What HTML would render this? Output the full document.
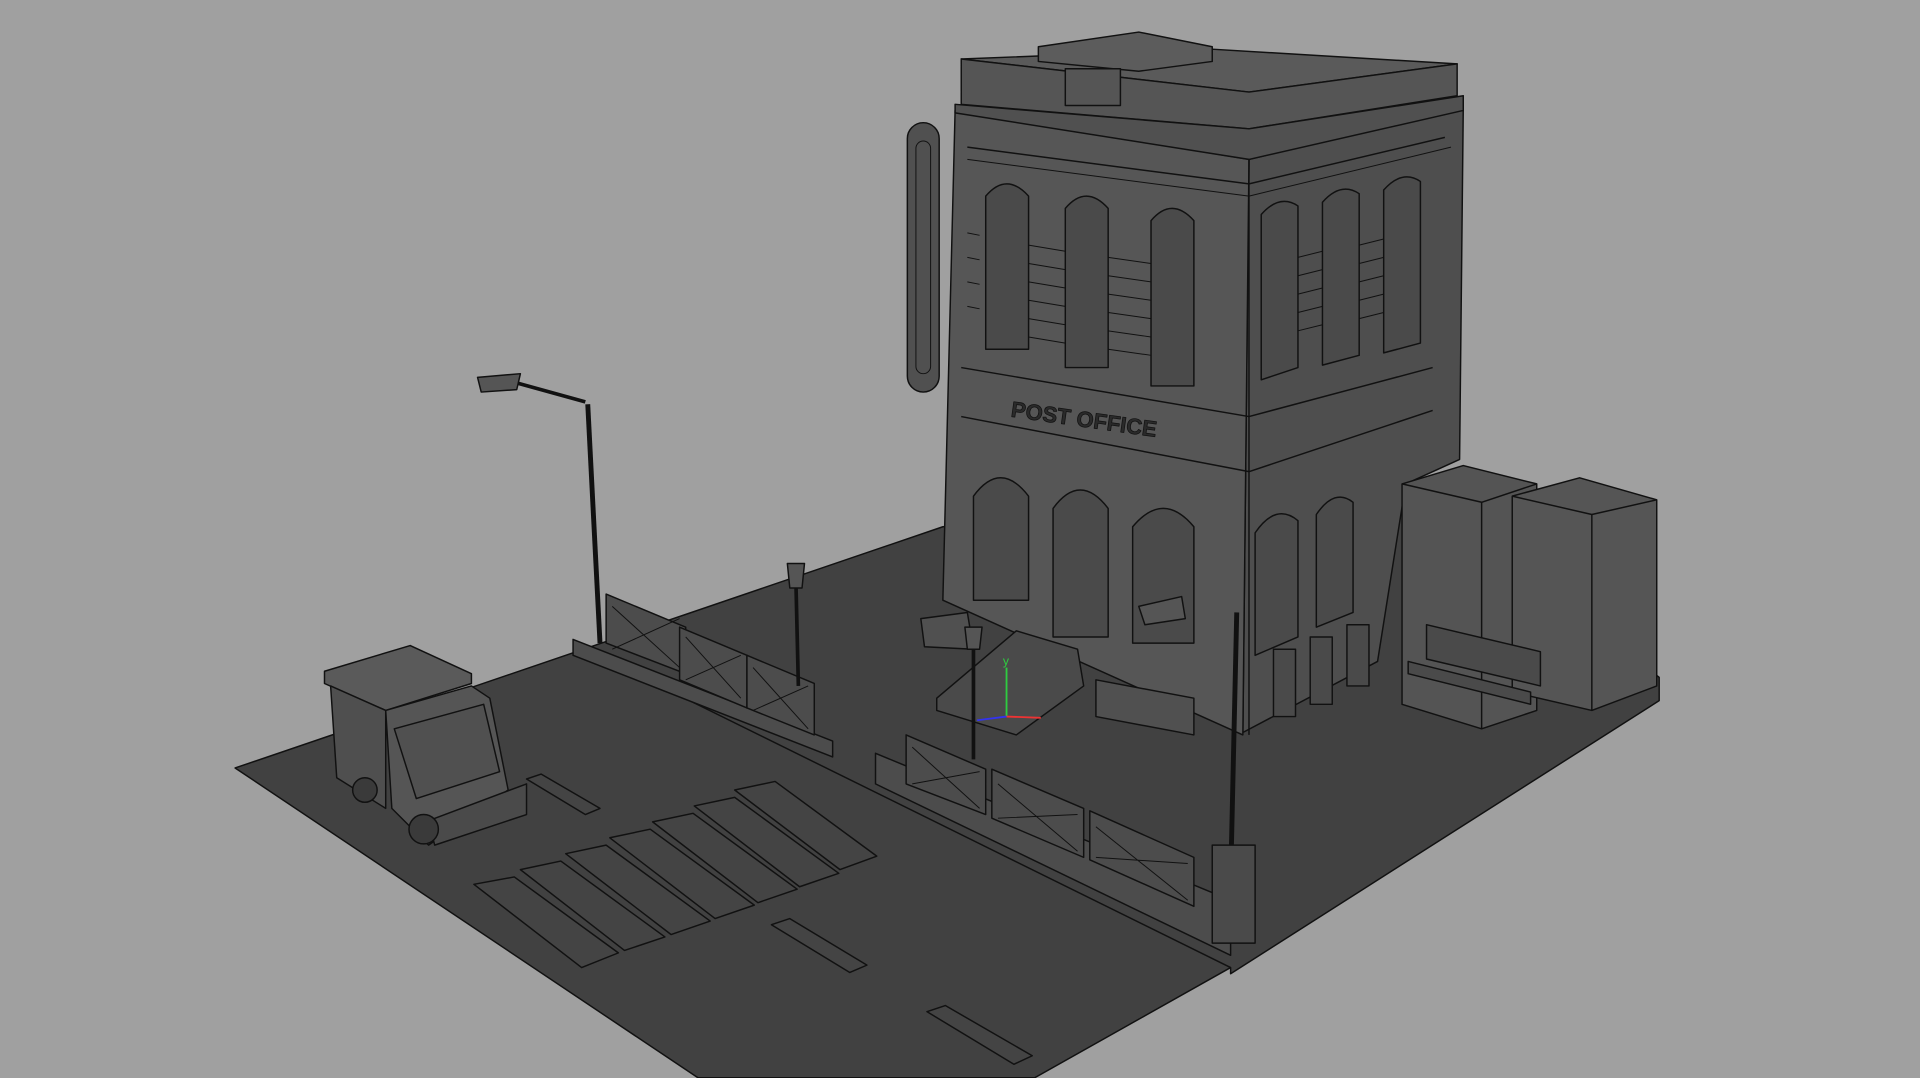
<!DOCTYPE html>
<html><head><meta charset="utf-8"><style>
html,body{margin:0;padding:0;background:#a0a0a0;width:1920px;height:1078px;overflow:hidden}
svg{display:block}
</style></head><body>
<svg width="1920" height="1078" viewBox="0 0 1568 880" xmlns="http://www.w3.org/2000/svg">
<rect width="1568" height="880" fill="#a0a0a0"/>
<g stroke="#111" stroke-width="1.2" stroke-linejoin="round">
<polygon points="192,627 770,430 1150,392 1355,553 1355,572 1005,795 1005,790 845,880 570,880" fill="#414141"/>
<g fill="#444">
<polygon points="387,722 420,716 505,778 475,790"/>
<polygon points="425,710 458,703 543,765 510,776"/>
<polygon points="462,697 495,690 580,752 548,763"/>
<polygon points="498,684 531,677 616,739 584,750"/>
<polygon points="533,671 566,664 651,726 619,737"/>
<polygon points="567,658 600,651 685,713 653,724"/>
<polygon points="600,645 633,638 716,699 686,710"/>
<polygon points="430,636 442,632 490,660 478,665"/>
<polygon points="630,755 645,750 708,788 694,794"/>
<polygon points="757,826 772,821 843,862 828,869"/>
</g>
<polyline points="468,525 1005,790" fill="none"/>
<polygon points="1020,130 1195,88 1192,375 1148,395 1125,540 1015,598" fill="#4e4e4e"/>
<polygon points="780,90 1020,130 1015,600 770,490" fill="#565656"/>
<polygon points="785,48 990,40 1190,52 1020,75" fill="#5a5a5a"/>
<polygon points="785,48 1020,75 1190,52 1190,78 1020,105 785,85" fill="#555"/>
<polygon points="780,85 1020,105 1195,78 1195,90 1020,130 780,92" fill="#505050"/>
<polygon points="848,38 930,26 990,38 990,50 930,58 848,50" fill="#5c5c5c"/>
<rect x="870" y="56" width="45" height="30" fill="#555"/>
<g fill="#4a4a4a">
<path d="M805 285 V160 Q822 140 840 160 V285 Z"/>
<path d="M870 300 V170 Q887 150 905 170 V300 Z"/>
<path d="M940 315 V180 Q957 160 975 180 V315 Z"/>
<path d="M1030 310 V175 Q1045 158 1060 168 V300 Z"/>
<path d="M1080 298 V165 Q1095 148 1110 158 V290 Z"/>
<path d="M1130 288 V155 Q1145 138 1160 148 V280 Z"/>
<path d="M795 490 V405 Q817 375 840 405 V490 Z"/>
<path d="M860 520 V415 Q882 385 905 415 V520 Z"/>
<path d="M925 525 V430 Q950 400 975 430 V525 Z"/>
<path d="M1025 535 V435 Q1042 410 1060 425 V520 Z"/>
<path d="M1075 512 V420 Q1090 398 1105 410 V500 Z"/>
</g>
<g fill="none" stroke-width="0.8">
<path d="M840 200 L870 205 M840 215 L870 220 M840 230 L870 235 M840 245 L870 250 M840 260 L870 265 M840 275 L870 280"/>
<path d="M905 210 L940 215 M905 225 L940 230 M905 240 L940 245 M905 255 L940 260 M905 270 L940 275 M905 285 L940 290"/>
<path d="M1060 210 L1080 205 M1060 225 L1080 220 M1060 240 L1080 235 M1060 255 L1080 250 M1060 270 L1080 265"/>
<path d="M1110 200 L1130 195 M1110 215 L1130 210 M1110 230 L1130 225 M1110 245 L1130 240 M1110 260 L1130 255"/>
<path d="M790 130 L1020 160 M1020 160 L1185 120"/>
<path d="M790 190 L800 192 M790 210 L800 212 M790 230 L800 232 M790 250 L800 252"/>
</g>
<polyline points="785,300 1020,340 1170,300" fill="none"/>
<polyline points="785,340 1020,385 1170,335" fill="none"/>
<polyline points="790,120 1020,150 1180,112" fill="none"/>
<polyline points="1020,130 1020,600" fill="none"/>
<rect x="741" y="100" width="26" height="220" rx="13" fill="#505050"/>
<rect x="748" y="115" width="12" height="190" rx="6" fill="none" stroke-width="0.8"/>
<text x="825" y="340" font-family="Liberation Sans, sans-serif" font-size="18" font-weight="bold" fill="#2a2a2a" stroke="#111" stroke-width="0.6" transform="rotate(8 825 340)">POST OFFICE</text>
<polygon points="765,570 830,515 880,530 885,560 830,600 765,580" fill="#4a4a4a"/>
<polygon points="752,505 790,500 795,530 755,528" fill="#505050"/>
<polygon points="895,555 975,570 975,600 895,585" fill="#505050"/>
<polygon points="1145,395 1195,380 1255,395 1255,580 1210,595 1145,575" fill="#545454"/>
<polygon points="1235,405 1290,390 1353,408 1353,560 1300,580 1235,565" fill="#555"/>
<polyline points="1235,405 1300,420 1353,408" fill="none"/>
<polyline points="1300,420 1300,580" fill="none"/>
<polyline points="1145,395 1210,410 1255,395" fill="none"/>
<polyline points="1210,410 1210,595" fill="none"/>
<polygon points="1165,510 1258,532 1258,560 1165,538" fill="#4a4a4a"/>
<polygon points="1150,540 1250,565 1250,575 1150,550" fill="#4a4a4a"/>
<g fill="#4a4a4a"><rect x="1040" y="530" width="18" height="55"/><rect x="1070" y="520" width="18" height="55"/><rect x="1100" y="510" width="18" height="50"/></g>
<g fill="#4c4c4c">
<polygon points="468,522 680,605 680,618 468,535"/>
<polygon points="495,485 560,512 560,550 495,525"/>
<polygon points="555,512 610,535 610,578 555,555"/>
<polygon points="610,535 665,558 665,600 610,578"/>
<polygon points="715,615 1005,735 1005,780 715,640"/>
<polygon points="740,600 805,628 805,665 740,640"/>
<polygon points="810,628 885,660 885,700 810,668"/>
<polygon points="890,662 975,700 975,740 890,702"/>
</g>
<g fill="none" stroke-width="0.8">
<path d="M500 495 L555 545 M555 505 L500 530 M560 520 L605 570 M605 535 L560 555 M615 545 L660 595 M660 560 L615 580"/>
<path d="M745 610 L800 660 M800 630 L745 640 M815 640 L880 695 M880 665 L815 668 M895 675 L970 735 M970 705 L895 700"/>
</g>
<polyline points="480,330 490,525" fill="none" stroke-width="4"/>
<polyline points="420,312 478,328" fill="none" stroke-width="3"/>
<polygon points="390,308 425,305 422,318 393,320" fill="#555"/>
<polyline points="1010,500 1005,720" fill="none" stroke-width="4"/>
<polygon points="930,495 965,487 968,505 935,510" fill="#555"/>
<polyline points="650,475 652,560" fill="none" stroke-width="3"/>
<polygon points="643,460 657,460 655,480 645,480" fill="#555"/>
<polyline points="795,525 795,620" fill="none" stroke-width="3"/>
<polygon points="788,512 802,512 800,530 790,530" fill="#555"/>
<rect x="990" y="690" width="35" height="80" fill="#4a4a4a"/>
<polygon points="265,548 335,527 385,550 385,558 315,580 265,558" fill="#5a5a5a"/>
<polygon points="270,560 315,580 315,660 275,635" fill="#4f4f4f"/>
<polygon points="315,580 385,560 400,570 415,645 350,690 320,660" fill="#555"/>
<polygon points="322,595 395,575 408,630 340,652" fill="#505050"/>
<polygon points="350,670 430,640 430,665 355,690" fill="#4a4a4a"/>
<circle cx="298" cy="645" r="10" fill="#3a3a3a"/>
<circle cx="346" cy="677" r="12" fill="#3a3a3a"/>
</g>
<line x1="822" y1="585" x2="822" y2="545" stroke="#2ecc40" stroke-width="1.5"/>
<line x1="822" y1="585" x2="850" y2="586" stroke="#e33" stroke-width="1.5"/>
<line x1="822" y1="585" x2="798" y2="588" stroke="#33e" stroke-width="1.5"/>
<text x="819" y="543" font-family="Liberation Sans, sans-serif" font-size="10" fill="#2ecc40">y</text>
</svg>
</body></html>
